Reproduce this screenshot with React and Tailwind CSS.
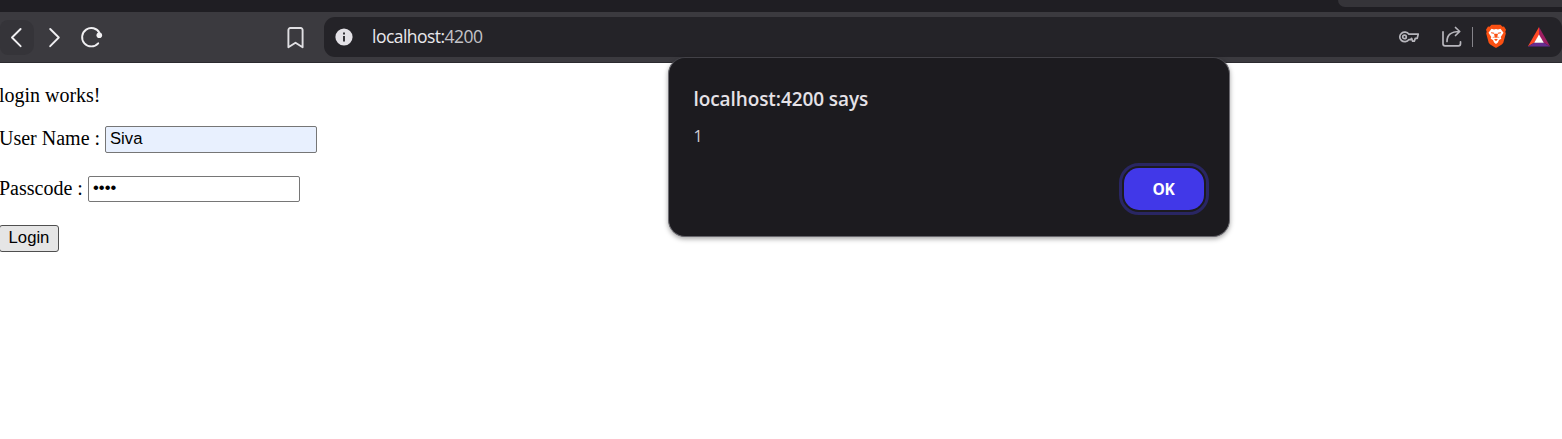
import React from "react";

function NavButtons() {
  return (
    <div className="flex h-full w-[324px] shrink-0 items-center">
      <div className="flex h-[35px] w-[34px] items-center rounded-r-[10px] rounded-l-[8px] bg-[#353439]">
        <svg width="34" height="35" viewBox="0 0 34 35" fill="none" stroke="#f0eff2" strokeWidth="1.9" strokeLinecap="round" strokeLinejoin="round">
          <path d="M20.6 9 12 17.500l8.600 8.700" />
        </svg>
      </div>
      <svg className="ml-[3px]" width="34" height="35" viewBox="0 0 34 35" fill="none" stroke="#f0eff2" strokeWidth="1.9" strokeLinecap="round" strokeLinejoin="round">
        <path d="m13.200 9 8.600 8.500-8.600 8.700" />
      </svg>
      <svg className="ml-[5px]" width="34" height="35" viewBox="0 0 34 35" fill="none">
        <path d="M22.200 23.300A9.200 9.200 0 1 1 23.500 13" stroke="#f0eff2" strokeWidth="1.9" strokeLinecap="round" />
        <circle cx="23.300" cy="15.300" r="2.800" fill="#f1f0f3" />
      </svg>
      <svg className="ml-[169px]" width="34" height="35" viewBox="0 0 34 35" fill="none">
        <path d="M11.300 8h10.400a1.900 1.900 0 0 1 1.900 1.900v17.400l-7.100-4.600-7.100 4.600V9.900a1.900 1.900 0 0 1 1.900-1.900Z" stroke="#e0dfe3" strokeWidth="1.9" strokeLinejoin="round" />
      </svg>
    </div>
  );
}

function AddressBar() {
  return (
    <div className="flex h-[40px] grow items-center rounded-[11px] bg-[#242328] pl-[11px]">
      <svg width="18" height="18" viewBox="0 0 18 18">
        <circle cx="9" cy="9" r="8.600" fill="#e3e1e6" />
        <rect x="8" y="4.500" width="2" height="2" fill="#353439" />
        <rect x="8" y="8" width="2" height="5.500" fill="#353439" />
      </svg>
      <span className="ml-[19px] pb-[2px] font-['Open_Sans',sans-serif] text-[17.5px] leading-[24px] tracking-[-0.53px] text-[#e9e8ec]">
        localhost:<span className="text-[#c4c3c8]">4200</span>
      </span>
      <div className="mr-[11px] ml-auto flex items-center">
        <svg width="22" height="16" viewBox="0 0 22 16" fill="none" stroke="#b7b6bc" strokeWidth="1.700" strokeLinejoin="round">
          <path d="M10.900 5.200A5 4.800 0 1 0 10.900 10.600H12.600l1-1.200 1 2.800h1.700l1-2.800h1.900l1-4.200Z" />
          <circle cx="6.500" cy="7.900" r="1.800" />
        </svg>
        <svg className="ml-[21px]" width="22" height="24" viewBox="0 0 22 24" fill="none" stroke="#b7b6bc" strokeWidth="1.700" strokeLinecap="round" strokeLinejoin="round">
          <path d="M2 6.800v12a2 2 0 0 0 2 2h13.500a2 2 0 0 0 2-2v-2M6 16.500c0-6 3.500-10 12.500-10M14.500 2.500l4.200 4-4.200 4" />
        </svg>
        <div className="ml-[9px] h-[20px] w-px bg-[#85848a]" />
        <svg className="ml-[12px] mb-[2px]" width="22" height="24" viewBox="0 0 22 24">
          <path d="M6.500.8h9l2 2 1.500-.3 2 3.300-.7 2 .5 1.700-2.500 9.200-1.500 1.800-5.300 3.200h-1l-5.300-3.200-1.500-1.800L1.200 9.500l.5-1.700-.7-2 2-3.300 1.500.3Z" fill="#fb5012" />
          <path d="m6.500 4.800 2.500.7 2-.5 2 .5 2.500-.7 3 4-2.800 4.100.6 1.800-2.300 1.200-1.100 2.700-1.900 1.500-1.900-1.500L8 15.900l-2.300-1.200.6-1.800-2.800-4.100Z" fill="#fff" />
          <path d="m6 8.200 3.200.6-.3.900-2.700-.5M16 8.200l-3.200.6.3.9 2.700-.5M9 9.800l.7 2.900-2.300.3.500.6 2.200-.1.900.6.900-.6 2.200.1.500-.6-2.300-.3.700-2.900M9 15.600l2-.8 2 .8-2 1.300Z" fill="#fb5012" />
        </svg>
        <svg className="ml-[20px]" width="24" height="22" viewBox="0 0 24 22">
          <path d="M12 1v8.500L7.500 16.500.8 20.500Z" fill="#ff4724" />
          <path d="m12 1 11.200 19.500-6.700-4L12 9.500Z" fill="#9e1f63" />
          <path d="m.8 20.500 6.700-4h9l6.700 4Z" fill="#662d91" />
          <path d="m12 8.500 4.800 8.300H7.200Z" fill="#fff" />
        </svg>
      </div>
    </div>
  );
}

function AlertDialog() {
  return (
    <div className="absolute top-[57px] left-[668px] flex h-[180px] w-[562px] flex-col rounded-[17px] border border-t-[#424147] border-r-[#6b6a70] border-b-[#66656b] border-l-[#6b6a70] bg-[#1c1b1f] pt-[27px] pr-[25px] pl-[24.5px] shadow-[0_2px_5px_rgba(0,0,0,0.35)]">
      <h1 className="font-['Open_Sans',sans-serif] text-[19px] leading-[28px] font-semibold tracking-[-0.09px] text-[#e5e2e7]">
        localhost:4200 says
      </h1>
      <p className="mt-[12px] font-['Open_Sans',sans-serif] text-[16px] leading-[22px] text-[#d0ced4]">1</p>
      <button className="mt-[21px] flex h-[42px] w-[80px] items-center justify-center self-end rounded-[15px] bg-[#4138e8] pt-[2px] pr-px font-['Open_Sans',sans-serif] text-[15.5px] font-bold tracking-[-0.3px] text-white outline-3 outline-offset-2 outline-[#292663]">
        OK
      </button>
    </div>
  );
}

export default function App() {
  return (
    <div className="relative flex h-[439px] w-[1562px] flex-col overflow-hidden bg-white">
      <div className="flex h-[12px] shrink-0 justify-end bg-[#1f1e23]">
        <div className="h-[7px] w-[224px] rounded-bl-[8px] bg-[#353439]" />
      </div>
      <header className="flex h-[51px] shrink-0 items-center border-b border-[#2b2a2f] bg-[#3b3a3f]">
        <NavButtons />
        <AddressBar />
      </header>
      <main className="flex flex-col items-start font-['Liberation_Serif',serif] text-[20px] leading-[24px] text-black">
        <p className="mt-[20px] -ml-px tracking-[-0.02px]">login works!</p>
        <label className="mt-[19px] -ml-px flex h-[27px] items-start">
          <span className="w-[106px]">User Name :</span>
          <input className="h-[27px] w-[212px] rounded-[2px] border border-[#767676] bg-[#e8f0fe] px-[4px] pb-[2px] font-['Liberation_Sans',sans-serif] text-[16.67px] leading-[20px]" defaultValue="Siva" />
        </label>
        <label className="mt-[23px] -ml-px flex h-[26px] items-start">
          <span className="w-[89px]">Passcode :</span>
          <input type="password" className="h-[26px] w-[212px] rounded-[2px] border border-[#767676] bg-white px-[4px] pb-[2px] font-['Liberation_Sans',sans-serif] text-[16.67px] leading-[20px]" defaultValue="1234" />
        </label>
        <button className="mt-[23px] -ml-px h-[27px] w-[60px] rounded-[3px] border border-[#4f4f4f] bg-[#e5e5e5] pb-[2px] font-['Liberation_Sans',sans-serif] text-[16.67px] leading-[22px]">
          Login
        </button>
      </main>
      <AlertDialog />
    </div>
  );
}
